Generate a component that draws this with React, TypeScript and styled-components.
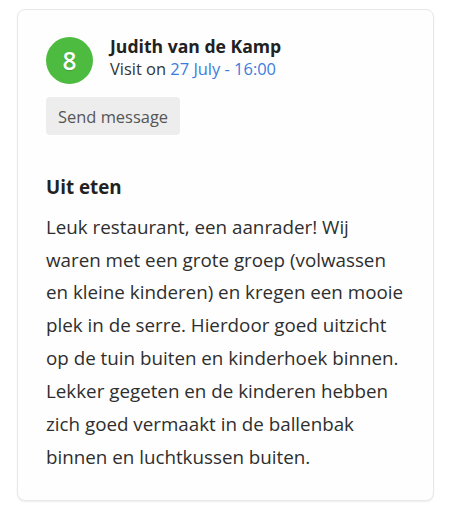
import React from "react";
import styled, { createGlobalStyle } from "styled-components";

interface ReviewProps {
  score: number;
  name: string;
  date: string;
  title: string;
  text: string;
}

const GlobalStyle = createGlobalStyle`
  body {
    margin: 0;
    background: #ffffff;
    font-family: "Open Sans", "Noto Sans", sans-serif;
    color: #2b2b2b;
  }
`;

const Page = styled.div`
  padding: 9px 16px 12px 17px;
`;

const Card = styled.article`
  border: 1px solid #e8e8e8;
  border-radius: 8px;
  background: #fefefe;
  box-shadow: 0 1px 2px rgba(0, 0, 0, 0.07);
  padding: 27px 28px 26px 28px;
`;

const Header = styled.header`
  display: flex;
  align-items: flex-start;
  gap: 17px;
`;

const Score = styled.div`
  flex: none;
  width: 47px;
  height: 47px;
  border-radius: 50%;
  background: #4cbb3f;
  color: #fff;
  display: flex;
  align-items: center;
  justify-content: center;
  font-size: 24.5px;
  font-weight: 600;
  text-shadow: 0 1px 1px rgba(0, 0, 0, 0.15);
`;

const Who = styled.div`
  display: flex;
  flex-direction: column;
  margin-top: -3px;
`;

const Name = styled.span`
  font-size: 17.6px;
  line-height: 24px;
  font-weight: 700;
  color: #222;
`;

const Visit = styled.span`
  font-size: 16.45px;
  line-height: 22.4px;
  color: #333;
`;

const DateLink = styled.span`
  color: #3b7ddd;
`;

const Button = styled.button`
  display: block;
  margin-top: 13px;
  height: 38px;
  padding: 0 12px;
  border: none;
  border-radius: 4px;
  background: #ededed;
  color: #555;
  font-family: inherit;
  font-size: 16.45px;
  font-weight: 500;
`;

const Title = styled.h3`
  margin: 40px 0 0;
  font-size: 18.8px;
  font-weight: 700;
  line-height: 25.6px;
  color: #222;
`;

const Body = styled.p`
  margin: 10px 0 0;
  font-size: 18.8px;
  line-height: 32.9px;
  color: #2e2e2e;
`;

const Review = ({ score, name, date, title, text }: ReviewProps) => {
  return (
    <Card>
      <Header>
        <Score>{score}</Score>
        <Who>
          <Name>{name}</Name>
          <Visit>
            Visit on <DateLink>{date}</DateLink>
          </Visit>
        </Who>
      </Header>
      <Button>Send message</Button>
      <Title>{title}</Title>
      <Body>{text}</Body>
    </Card>
  );
};

const App = () => {
  return (
    <>
      <GlobalStyle />
      <Page>
        <Review
          score={8}
          name="Judith van de Kamp"
          date="27 July - 16:00"
          title="Uit eten"
          text="Leuk restaurant, een aanrader! Wij waren met een grote groep (volwassen en kleine kinderen) en kregen een mooie plek in de serre. Hierdoor goed uitzicht op de tuin buiten en kinderhoek binnen. Lekker gegeten en de kinderen hebben zich goed vermaakt in de ballenbak binnen en luchtkussen buiten."
        />
      </Page>
    </>
  );
};

export default App;
